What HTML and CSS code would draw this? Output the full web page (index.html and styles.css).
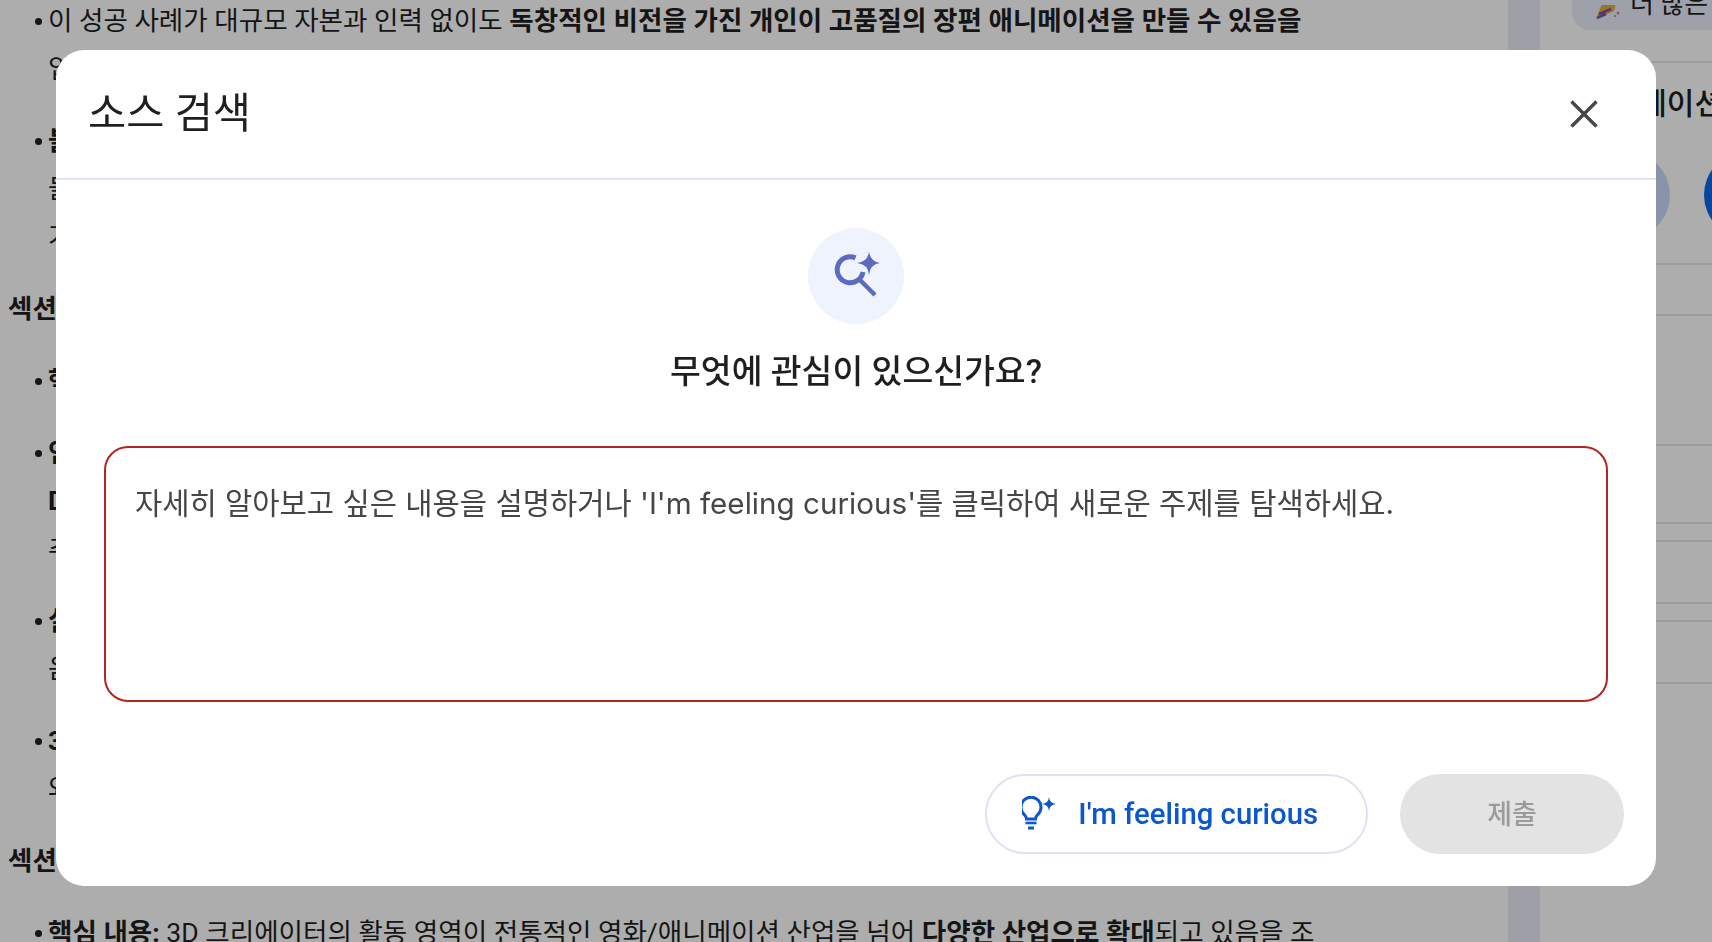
FILE: index.html
```html
<!DOCTYPE html>
<html lang="ko">
<head>
    <meta charset="utf-8">
    <title>소스 검색</title>
    <link rel="stylesheet" href="styles.css">
</head>
<body>
    <div class="page">
        <main class="report">
            <ul>
                <li>이 성공 사례가 대규모 자본과 인력 없이도 <b>독창적인 비전을 가진 개인이 고품질의 장편 애니메이션을 만들 수 있음을</b><br>입증합니다.</li>
                <li><b>블렌더</b>의 역할<br>들어가며<br>가능성</li>
            </ul>
            <h3>섹션 3</h3>
            <ul>
                <li><b>핵심 내용</b></li>
                <li><b>인디 제작</b><br><b>D</b>IY<br>추가</li>
                <li><b>실시간</b><br>음악</li>
                <li><b>3D</b><br>와이드</li>
            </ul>
            <h3>섹션 4</h3>
            <ul>
                <li><b>핵심 내용:</b> 3D 크리에이터의 활동 영역이 전통적인 영화/애니메이션 산업을 넘어 <b>다양한 산업으로 확대</b>되고 있음을 조</li>
            </ul>
        </main>
        <div class="scroll-strip"></div>
        <aside class="sidebar">
            <div class="upgrade-pill">
                <svg class="popper" width="26" height="14" viewBox="0 0 26 14">
                    <path d="M0 14 L8 -6 L20 -2 L18 6 Z" fill="#e0b030"/>
                    <path d="M3 9 L15 4 M1 13 L10 9" stroke="#7b52ab" stroke-width="2.5"/>
                    <circle cx="22" cy="8" r="1.5" fill="#d98a80"/>
                    <circle cx="19" cy="11" r="1" fill="#7b8fb0"/>
                </svg>
                <span>더 많은 혜택</span>
            </div>
            <div class="side-row side-intro"></div>
            <div class="side-row side-creators">
                <div class="side-title">애니메이션</div>
                <div class="avatars">
                    <span class="avatar avatar-light"></span>
                    <span class="avatar avatar-blue"></span>
                </div>
            </div>
            <div class="side-row side-h51"></div>
            <div class="side-row side-h130"></div>
            <div class="side-row side-h78"></div>
            <div class="side-row side-h18"></div>
            <div class="side-row side-h62"></div>
            <div class="side-row side-h18"></div>
            <div class="side-row side-h62"></div>
        </aside>
    </div>

    <div class="scrim"></div>

    <div class="modal">
        <header class="modal-header">
            <h2>소스 검색</h2>
            <button class="close-button" aria-label="닫기">
                <svg width="32" height="32" viewBox="0 0 32 32">
                    <path d="M3.5 3.5 L28.5 28.5 M28.5 3.5 L3.5 28.5" stroke="#444746" stroke-width="3.4" fill="none"/>
                </svg>
            </button>
        </header>
        <div class="modal-body">
            <div class="search-badge">
                <svg width="48" height="48" viewBox="0 0 48 48">
                    <path d="M23.5 5.9 A13 13 0 1 0 31 20" stroke="#5c6bc0" stroke-width="5" fill="none"/>
                    <path d="M28 28 L43 43" stroke="#5c6bc0" stroke-width="4.4" fill="none"/>
                    <path d="M37 -1 Q38 10 49 11 Q38 12 37 23 Q36 12 25 11 Q36 10 37 -1 Z" fill="#5c6bc0"/>
                </svg>
            </div>
            <h3 class="prompt">무엇에 관심이 있으신가요?</h3>
            <div class="query-box">자세히 알아보고 싶은 내용을 설명하거나 'I'm feeling curious'를 클릭하여 새로운 주제를 탐색하세요.</div>
        </div>
        <footer class="modal-footer">
            <button class="curious-button">
                <svg width="36" height="36" viewBox="0 0 36 36">
                    <path d="M6.5 23 Q6.5 20.5 4.5 18.8 A10 10 0 1 1 17.5 18.8 Q15.5 20.5 15.5 23 Z" transform="translate(-2 0)" stroke="#0b57d0" stroke-width="3" fill="none"/>
                    <path d="M3.5 27 H14.5" stroke="#0b57d0" stroke-width="2.6"/>
                    <path d="M6 32 H12" stroke="#0b57d0" stroke-width="3"/>
                    <path d="M27 1 Q27.6 7.4 34 8 Q27.6 8.6 27 15 Q26.4 8.6 20 8 Q26.4 7.4 27 1 Z" fill="#0b57d0"/>
                </svg>
                <span>I'm feeling curious</span>
            </button>
            <button class="submit-button" disabled>제출</button>
        </footer>
    </div>
</body>
</html>
```

FILE: styles.css
```css
* {
    box-sizing: border-box;
}

html, body {
    height: 100%;
}

body {
    margin: 0;
    overflow: hidden;
    background-color: #fff;
    color: #1f1f1f;
    font-family: Roboto, "Noto Sans CJK KR", sans-serif;
}

.page {
    display: flex;
    height: 100%;
}

/* report behind the dialog */
.report {
    width: 1508px;
    flex-shrink: 0;
    margin-top: -3px;
    padding-left: 8px;
    font-size: 26.55px;
    line-height: 48px;
    white-space: nowrap;
    overflow: hidden;
}

.report ul {
    margin: 0;
    padding: 0 0 0 40px;
    list-style: none;
}

.report li {
    margin-bottom: 24px;
}

.report li::before {
    content: "";
    display: inline-block;
    width: 7px;
    height: 7px;
    margin: 0 6px 0 -13px;
    border-radius: 50%;
    background-color: #1f1f1f;
    vertical-align: 0.2em;
}

.report h3 {
    margin: 0 0 24px;
    font-size: 26.5px;
    font-weight: 700;
}

.report b {
    font-weight: 700;
}

.scroll-strip {
    width: 32px;
    flex-shrink: 0;
    background-color: #ebebf7;
}

.sidebar {
    flex: 1;
    min-width: 0;
    padding-left: 32px;
    overflow: hidden;
}

.upgrade-pill {
    display: flex;
    align-items: flex-end;
    gap: 8px;
    height: 30px;
    padding: 0 0 11px 24px;
    border-radius: 0 0 0 18px;
    background-color: #e9edfb;
    font-size: 26px;
    line-height: 30px;
    white-space: nowrap;
    overflow: hidden;
}

.popper {
    flex-shrink: 0;
}

.side-row {
    border-bottom: 2px solid #e3e6f2;
}

.side-intro {
    height: 33px;
}

.side-creators {
    height: 202px;
    padding-left: 10px;
    white-space: nowrap;
}

.side-title {
    padding: 20px 0 0 2px;
    font-size: 30px;
    font-weight: 500;
    line-height: 42px;
}

.avatars {
    display: flex;
    gap: 34px;
    margin-top: 26px;
}

.avatar {
    width: 88px;
    height: 88px;
    flex-shrink: 0;
    border-radius: 50%;
}

.avatar-light {
    background-color: #cbdbfd;
}

.avatar-blue {
    background-color: #0f66e8;
}

.side-h51 { height: 51px; }
.side-h130 { height: 130px; }
.side-h78 { height: 78px; }
.side-h18 { height: 18px; }
.side-h62 { height: 62px; }

.scrim {
    position: fixed;
    inset: 0;
    background-color: rgba(0, 0, 0, 0.32);
}

/* dialog */
.modal {
    position: fixed;
    left: 56px;
    top: 50px;
    width: 1600px;
    height: 836px;
    display: flex;
    flex-direction: column;
    border-radius: 28px;
    background-color: #fff;
    overflow: hidden;
}

.modal-header {
    display: flex;
    align-items: center;
    justify-content: space-between;
    height: 130px;
    flex-shrink: 0;
    padding: 0 56px 0 32px;
    border-bottom: 2px solid #e1e5f1;
}

.modal-header h2 {
    margin: 0 0 8px;
    font-size: 41.5px;
    font-weight: 400;
}

.close-button {
    display: flex;
    padding: 0;
    border: none;
    background: none;
    cursor: pointer;
}

.modal-body {
    display: flex;
    flex-direction: column;
    align-items: center;
    padding: 48px 48px 0;
}

.search-badge {
    display: flex;
    align-items: center;
    justify-content: center;
    width: 96px;
    height: 96px;
    border-radius: 50%;
    background-color: #eff3fe;
}

.prompt {
    margin: 25px 0 0;
    font-size: 33.5px;
    font-weight: 500;
    line-height: 46px;
}

.query-box {
    width: 100%;
    height: 256px;
    margin-top: 51px;
    padding: 34px 29px;
    border: 2px solid #b3261e;
    border-radius: 24px;
    color: #444746;
    font-family: Inter, "Noto Sans CJK KR", sans-serif;
    font-size: 29.64px;
    line-height: 42px;
}

.modal-footer {
    display: flex;
    justify-content: flex-end;
    gap: 32px;
    margin-top: 72px;
    padding-right: 32px;
}

.modal-footer button {
    height: 80px;
    border-radius: 40px;
    font-family: inherit;
    cursor: pointer;
}

.curious-button {
    display: flex;
    align-items: center;
    gap: 20px;
    padding: 0 48px 0 35px;
    border: 2px solid #dfe3f0;
    background-color: #fff;
    color: #0b57d0;
    font-size: 29.3px;
    font-weight: 500;
}

.submit-button {
    width: 224px;
    padding-bottom: 5px;
    border: none;
    background-color: #e3e3e3;
    color: #9b9b9b;
    font-size: 27px;
    font-weight: 500;
}
```
